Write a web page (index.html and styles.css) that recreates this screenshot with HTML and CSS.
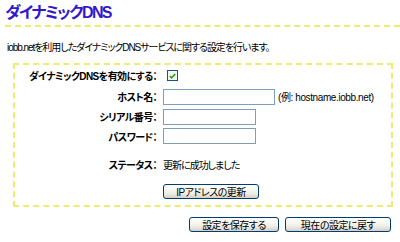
FILE: index.html
```html
<!DOCTYPE html>
<html lang="ja">
<head>
<meta charset="utf-8">
<link rel="stylesheet" href="styles.css">
</head>
<body>
<div class="page">
  <h1 class="title">ダイナミックDNS</h1>
  <div class="rule"></div>
  <p class="intro">iobb.netを利用したダイナミックDNSサービスに関する設定を行います。</p>
  <div class="box">
    <div class="form">
      <div class="label">ダイナミックDNSを有効にする：</div>
      <div class="value"><span class="check"><svg width="7" height="6" viewBox="0 0 7 6"><path d="M0.8 3 L2.6 4.8 L6.2 1" fill="none" stroke="#21a121" stroke-width="1.6"/></svg></span></div>
      <div class="label">ホスト名：</div>
      <div class="value"><span class="input wide"></span><span class="hint">(例: hostname.iobb.net)</span></div>
      <div class="label">シリアル番号：</div>
      <div class="value"><span class="input"></span></div>
      <div class="label">パスワード：</div>
      <div class="value"><span class="input"></span></div>
      <div class="label">ステータス：</div>
      <div class="value status">更新に成功しました</div>
      <div class="label"></div>
      <div class="value"><span class="btn ip">IPアドレスの更新</span></div>
    </div>
  </div>
  <div class="actions">
    <span class="btn save">設定を保存する</span>
    <span class="btn revert">現在の設定に戻す</span>
  </div>
</div>
</body>
</html>
```
FILE: styles.css
```css
html, body {
  margin: 0;
  padding: 0;
  background: #ffffff;
}
body {
  font-family: "Liberation Sans", "Noto Sans CJK JP", sans-serif;
  font-size: 10px;
  color: #000;
  font-feature-settings: "palt";
}
.page {
  width: 400px;
  height: 242px;
  overflow: hidden;
  position: relative;
}
.title {
  margin: 0;
  padding: 4px 0 0 5px;
  height: 21px;
  font-size: 16px;
  line-height: 18px;
  font-weight: bold;
  color: #3318cc;
  letter-spacing: -1.6px;
}
.rule {
  margin-left: 5px;
  height: 0;
  border-top: 2px dashed #ecec70;
}
.intro {
  margin: 14px 0 0 7px;
  height: 13px;
  line-height: 13px;
  font-size: 10px;
  letter-spacing: -1.05px;
}
.box {
  margin: 9px 0 0 13px;
  width: 376px;
  height: 140px;
  border: 2px dashed #ecec70;
  box-sizing: content-box;
}
.form {
  display: grid;
  grid-template-columns: 142px 1fr;
  grid-template-rows: 21px 21px 19px 20px 36px 19px;
  column-gap: 6px;
}
.label {
  font-weight: bold;
  display: flex;
  align-items: center;
  justify-content: flex-end;
  letter-spacing: -0.6px;
  white-space: nowrap;
}
.value {
  display: flex;
  align-items: center;
}
.check {
  width: 9px;
  height: 9px;
  border: 1px solid #1c5180;
  background: #f4f4f0;
  display: flex;
  align-items: center;
  justify-content: center;
  margin-left: 4px;
}
.input {
  width: 91px;
  height: 14px;
  border: 1px solid #7f9db9;
  background: #fff;
  display: inline-block;
}
.input.wide {
  width: 110px;
}
.hint {
  margin-left: 3px;
  letter-spacing: -0.4px;
}
.status {
  letter-spacing: -1px;
}
.btn {
  display: inline-flex;
  align-items: center;
  justify-content: center;
  height: 13px;
  border: 1px solid #003c74;
  border-radius: 3px;
  background: linear-gradient(#ffffff, #f0f0ea 60%, #d6d0c5);
  font-size: 10px;
  letter-spacing: -0.5px;
  box-sizing: content-box;
}
.btn.ip {
  width: 94px;
}
.actions {
  display: flex;
  gap: 6px;
  margin: 10px 0 0 189px;
}
.btn.save {
  width: 88px;
}
.btn.revert {
  width: 104px;
}
```
